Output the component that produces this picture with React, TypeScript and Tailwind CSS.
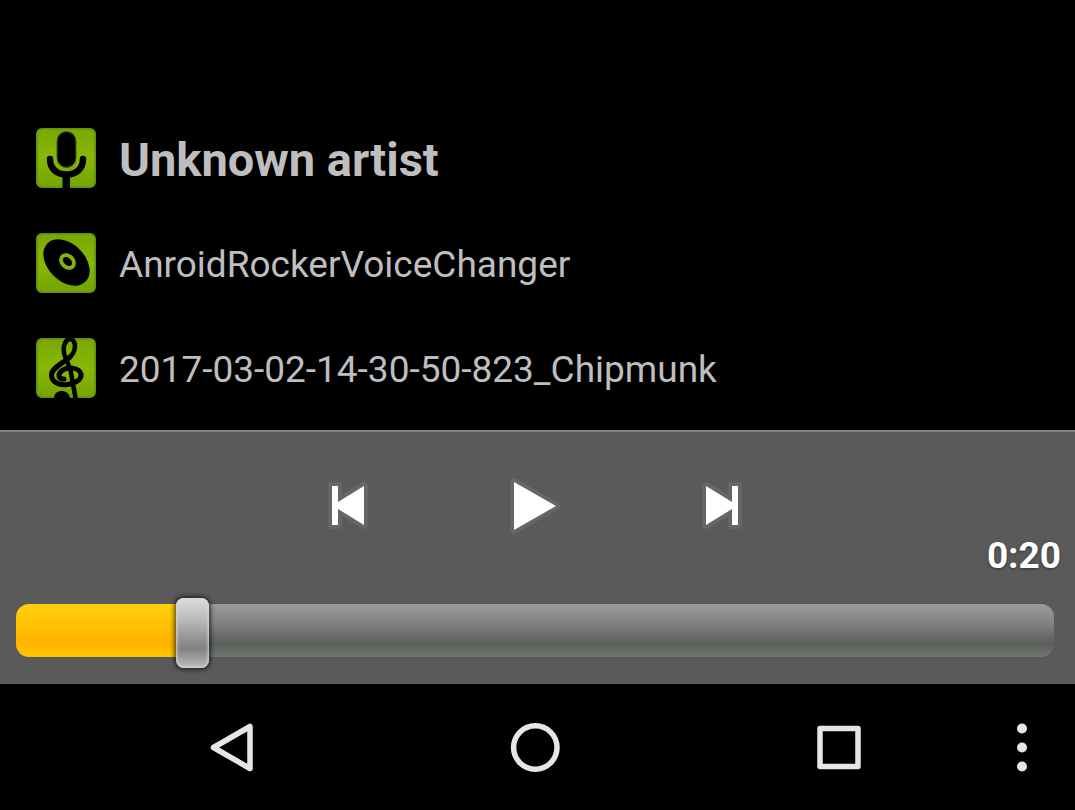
import { useState, type CSSProperties, type ReactNode } from "react";

function Badge({ children }: { children: ReactNode }) {
  return (
    <svg viewBox="0 0 60 60" className="size-[60px] shrink-0" aria-hidden="true">
      <defs>
        <linearGradient id="badge" x1="0" y1="0" x2="0" y2="1">
          <stop offset="0" stopColor="#78a802" />
          <stop offset="0.5" stopColor="#87b806" />
          <stop offset="1" stopColor="#73a402" />
        </linearGradient>
      </defs>
      <rect x="0.8" y="0.8" width="58.4" height="58.4" rx="5" fill="url(#badge)" stroke="#658d16" strokeWidth="1.6" />
      {children}
    </svg>
  );
}

function MicBadge() {
  return (
    <Badge>
      <rect x="21" y="3.500" width="19" height="36" rx="9.5" fill="#000" stroke="#3f6400" strokeWidth="1" />
      <path d="M14 31C14 41 21 46.5 30.500 46.500S47 41 47 31" fill="none" stroke="#000" strokeWidth="6.500" strokeLinecap="round" />
      <path d="M26.500 46H34V60H26.500Z" fill="#000" />
    </Badge>
  );
}

function DiscBadge() {
  return (
    <Badge>
      <ellipse cx="30.500" cy="29.500" rx="27" ry="18.500" transform="rotate(45 30.500 29.500)" fill="#000" />
      <ellipse cx="31.500" cy="28.500" rx="7.200" ry="5.600" transform="rotate(45 31.500 28.500)" fill="none" stroke="#84b408" strokeWidth="3.800" />
    </Badge>
  );
}

function ClefBadge() {
  return (
    <Badge>
      <g fill="none" stroke="#000" strokeLinecap="round" strokeLinejoin="round">
        <path d="M39.500 60L34.500 32L28.500 17C26 8 30 0 35 1C41 4 40 14 33 20" strokeWidth="4.500" />
        <path d="M34 19C26 26 15.500 30 15.500 37C15.500 44 23 47.500 31 46.500C40 45.500 46 41 45 36C43 29 31 28.500 26 32.500C21 36.500 22.500 41.500 28 41" strokeWidth="5" />
      </g>
      <path d="M18 60C18 50.500 33 50.500 34 60Z" fill="#000" />
    </Badge>
  );
}

function InfoRow({ icon, children }: { icon: ReactNode; children: ReactNode }) {
  return (
    <div className="flex h-[105px] items-center gap-[23px]">
      {icon}
      <div className="pt-[5px]">{children}</div>
    </div>
  );
}

function MediaButton({ label, d }: { label: string; d: string }) {
  return (
    <button type="button" aria-label={label} className="flex w-[187px] justify-center">
      <svg viewBox="0 0 60 60" className="size-[60px]" strokeLinejoin="round">
        <path d={d} fill="#666" stroke="#666" strokeWidth="8" />
        <path d={d} fill="#fff" />
      </svg>
    </button>
  );
}

function NavButton({ label, children }: { label: string; children: ReactNode }) {
  return (
    <button type="button" aria-label={label} className="flex flex-1 items-center justify-center">
      <svg viewBox="0 0 60 60" className="size-[60px]" fill="none" stroke="#e6e6e6" strokeWidth="5.500" strokeLinejoin="round">
        {children}
      </svg>
    </button>
  );
}

export default function App() {
  const [position, setPosition] = useState(159);
  const fill = { "--fill": `${(position / 1000) * 97 + 1.5}%` } as CSSProperties;

  return (
    <div className="flex min-h-screen flex-col bg-black font-[Roboto,sans-serif]">
      <main className="flex flex-1 flex-col justify-end px-9 pb-[10px] text-[#bebebe]">
        <InfoRow icon={<MicBadge />}>
          <h1 className="text-[47px] leading-[56px] font-bold">Unknown artist</h1>
        </InfoRow>
        <InfoRow icon={<DiscBadge />}>
          <p className="text-[37px] leading-[44px]">AnroidRockerVoiceChanger</p>
        </InfoRow>
        <InfoRow icon={<ClefBadge />}>
          <p className="text-[37px] leading-[44px]">2017-03-02-14-30-50-823_Chipmunk</p>
        </InfoRow>
      </main>

      <section aria-label="Player" className="border-t-2 border-[#828282] bg-[#5a5a5a] pt-11 pb-[17px]">
        <div className="flex justify-center pr-[6px]">
          <MediaButton label="Previous" d="M14 10H20V26L46 10V49L20 33V49H14Z" />
          <MediaButton label="Play" d="M9 6L51 30L9 54Z" />
          <MediaButton label="Next" d="M14 10L40 26V10H46V49H40V33L14 49Z" />
        </div>
        <div className="px-[14px] text-right text-[37px] leading-[40px] font-bold text-white [text-shadow:0_1px_3px_#333]">
          0:20
        </div>
        <div className="flex pt-[17px] pr-[21px] pl-4">
          <input
            type="range"
            aria-label="Playback position"
            min={0}
            max={1000}
            value={position}
            onChange={(e) => setPosition(Number(e.target.value))}
            style={fill}
            className="h-[74px] w-full appearance-none bg-transparent [&::-webkit-slider-runnable-track]:h-[53px] [&::-webkit-slider-runnable-track]:rounded-[13px] [&::-webkit-slider-runnable-track]:bg-[linear-gradient(#ffd10a,#ffb300_74%,#ffc700),linear-gradient(#9c9c9c,#808280_36%,#5b5e5b_74%,#70756f)] [&::-webkit-slider-runnable-track]:bg-[length:var(--fill)_100%,100%_100%] [&::-webkit-slider-runnable-track]:bg-no-repeat [&::-webkit-slider-thumb]:mt-[-6px] [&::-webkit-slider-thumb]:h-[70px] [&::-webkit-slider-thumb]:w-[33px] [&::-webkit-slider-thumb]:appearance-none [&::-webkit-slider-thumb]:rounded-[8px] [&::-webkit-slider-thumb]:bg-[linear-gradient(#dedede,#b4b4b4_35%,#808080_72%,#bcbcbc)] [&::-webkit-slider-thumb]:shadow-[inset_0_0_3px_1px_#d8d8d8,0_0_4px_2px_#0009]"
          />
        </div>
      </section>

      <nav aria-label="System" className="flex h-[126px] pl-20">
        <NavButton label="Back">
          <path d="M11.500 30.500L48 9.500V51.500Z" />
        </NavButton>
        <NavButton label="Home">
          <circle cx="30.300" cy="30.500" r="21.700" />
        </NavButton>
        <NavButton label="Overview">
          <rect x="12" y="11.500" width="38" height="38" />
        </NavButton>
        <button type="button" aria-label="More options" className="flex w-[85px] items-center justify-center pr-5">
          <svg viewBox="0 0 20 60" className="h-[60px] w-5" fill="#e6e6e6">
            <circle cx="10" cy="11.500" r="5" />
            <circle cx="10" cy="30.500" r="5" />
            <circle cx="10" cy="49.500" r="5" />
          </svg>
        </button>
      </nav>
    </div>
  );
}
